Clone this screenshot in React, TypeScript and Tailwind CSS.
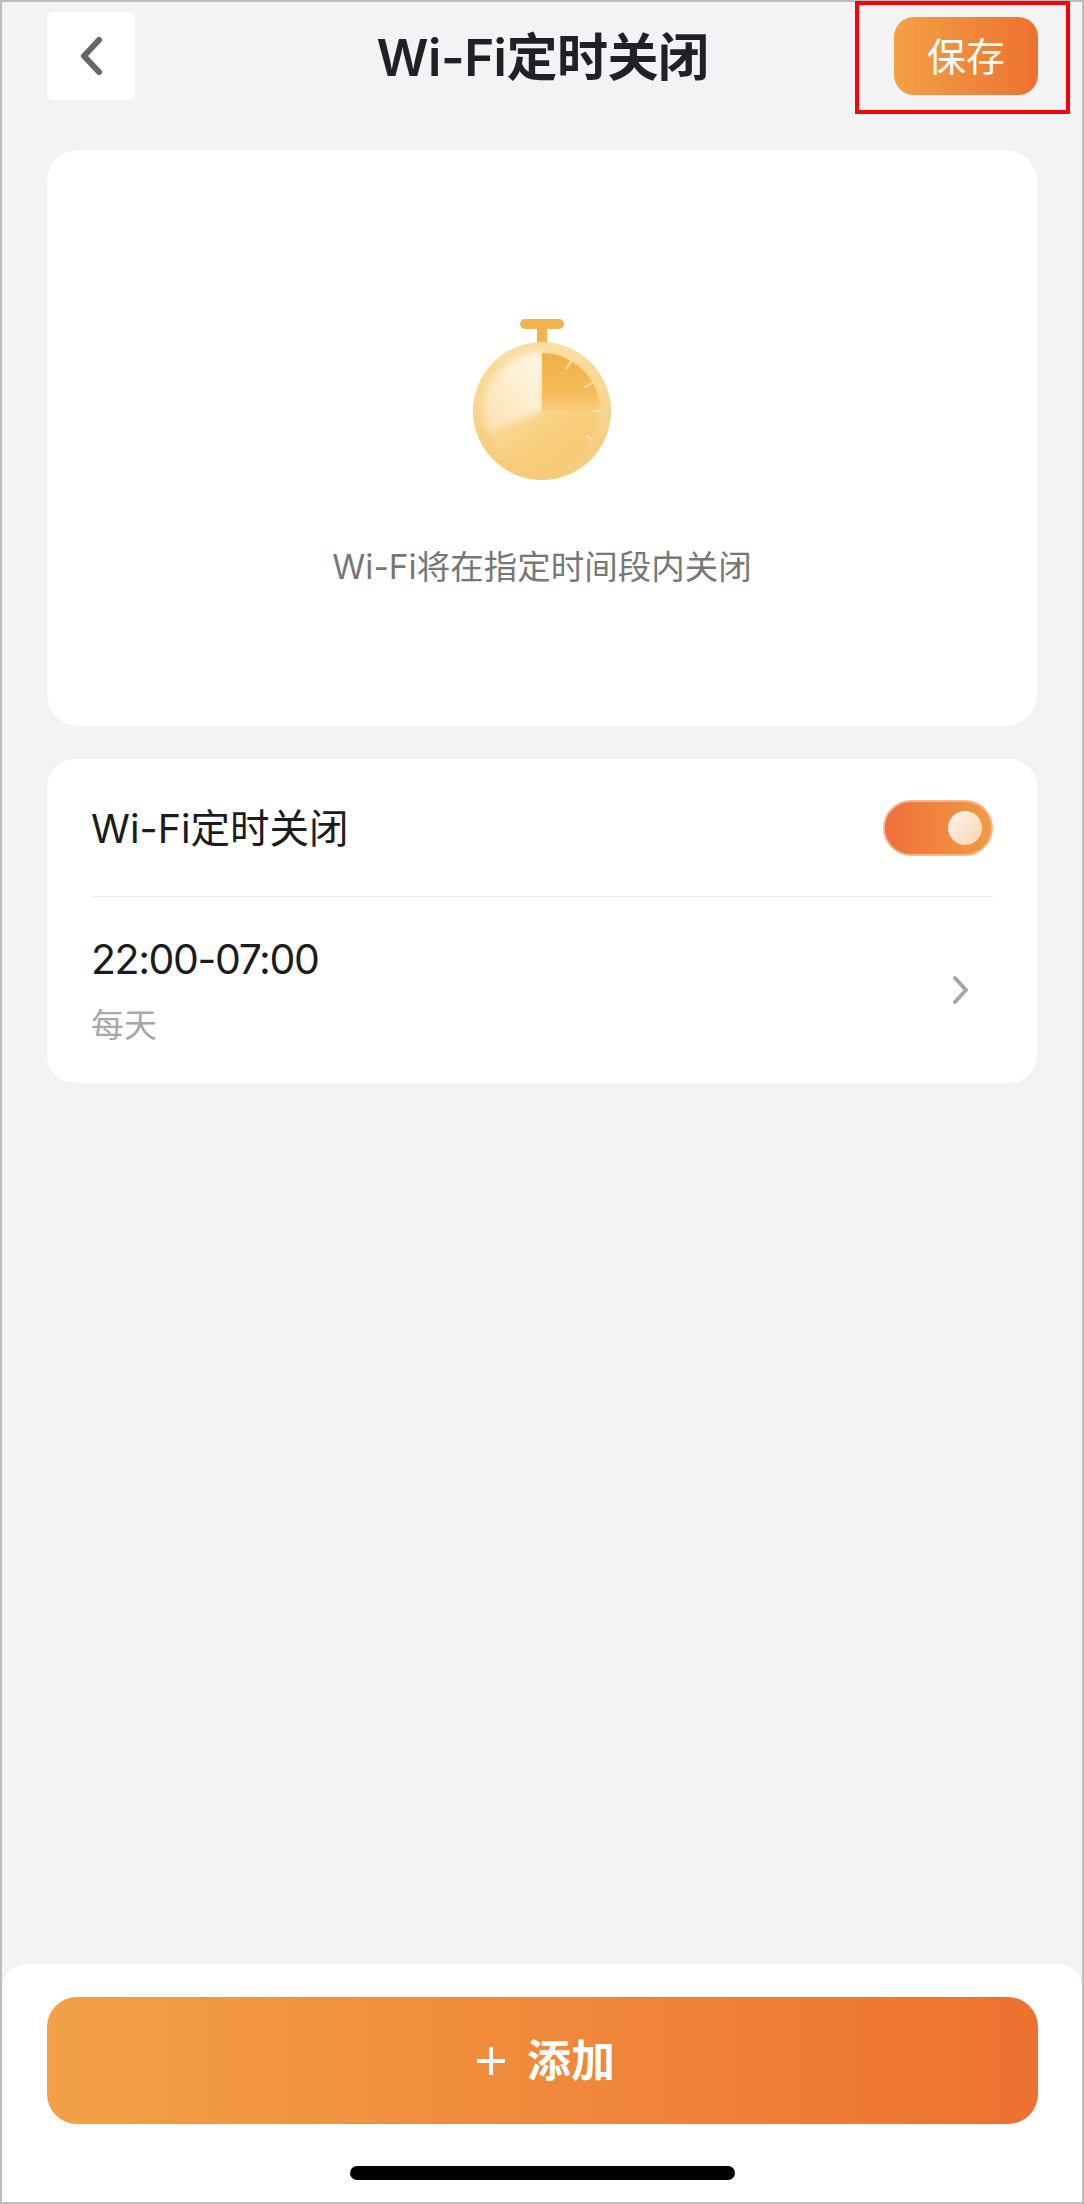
const cjk = "font-['Inter','Noto_Sans_CJK_SC',sans-serif]";

function Stopwatch() {
  return (
    <svg className="block" width="140" height="162" viewBox="0 0 140 162" fill="none">
      <defs>
        <linearGradient id="ring" x1="0" y1="0" x2="0" y2="1">
          <stop offset="0" stopColor="#fadfa6" />
          <stop offset="1" stopColor="#f6ca76" />
        </linearGradient>
        <linearGradient id="quarter" x1="0" y1="0" x2="0" y2="1">
          <stop offset="0" stopColor="#f2b044" />
          <stop offset="0.7" stopColor="#f5bd5c" />
          <stop offset="1" stopColor="#f8cd7c" />
        </linearGradient>
        <linearGradient id="rest" x1="0.2" y1="0.3" x2="0.7" y2="1">
          <stop offset="0" stopColor="#fae0aa" />
          <stop offset="0.6" stopColor="#f8cf7e" />
          <stop offset="1" stopColor="#f7ca72" />
        </linearGradient>
        <linearGradient id="pale" x1="1" y1="0" x2="0" y2="1">
          <stop offset="0" stopColor="#fff8ec" />
          <stop offset="0.55" stopColor="#fdebc8" />
          <stop offset="1" stopColor="#fbe0ab" />
        </linearGradient>
        <filter id="soft" x="-20%" y="-20%" width="140%" height="140%">
          <feGaussianBlur stdDeviation="3" />
        </filter>
      </defs>
      <rect x="48" y="0" width="44" height="10" rx="5" fill="#f3b44f" />
      <rect x="65" y="8" width="10" height="18" fill="#f3b44f" />
      <circle cx="70" cy="92" r="69" fill="url(#ring)" />
      <circle cx="70" cy="92" r="58" fill="url(#rest)" filter="url(#soft)" />
      <path d="M70 92 V34 A58 58 0 0 0 12 92 Q13 103 17 113 Z" fill="url(#pale)" filter="url(#soft)" />
      <path d="M70 92 V34 A58 58 0 0 1 128 92 Z" fill="url(#quarter)" />
      <g stroke="#fbe3b3" strokeWidth="2" strokeLinecap="round">
        <path d="M99 42 L95 49" />
        <path d="M120 64 L113 68" />
        <path d="M128 92 L122 92" />
        <path d="M120 120 L114 117" />
      </g>
    </svg>
  );
}

export default function App() {
  return (
    <div className={`relative w-[1084px] h-[2204px] border-2 border-[#bdbdbd] bg-[#f2f3f5] flex flex-col ${cjk}`}>
      <header className="grid grid-cols-[1fr_auto_1fr] items-start pl-[45px] pr-[44px] pt-[10px]">
        <div className="w-[88px] h-[88px] bg-white rounded-[6px] flex items-center justify-center">
          <svg width="24" height="38" viewBox="0 0 24 38" fill="none">
            <path d="M20 3 L5 19 L20 35" stroke="#666666" strokeWidth="6" strokeLinecap="round" strokeLinejoin="round" />
          </svg>
        </div>
        <h1 className="text-[51px] leading-[68px] tracking-[-0.5px] mt-[12px] font-semibold text-[#1f2126]">Wi-Fi定时关闭</h1>
        <button className="justify-self-end w-[144px] h-[78px] mt-[5px] rounded-[20px] bg-gradient-to-r from-[#f2a146] to-[#ed7030] text-white text-[39px] leading-none">
          保存
        </button>
      </header>

      <section className="mx-[45px] mt-[50px] h-[576px] bg-white rounded-[32px] flex flex-col items-center pt-[169px]">
        <Stopwatch />
        <p className="mt-[62px] text-[33.5px] leading-[48px] text-[#777777]">Wi-Fi将在指定时间段内关闭</p>
      </section>

      <section className="mx-[45px] mt-[33px] h-[324px] bg-white rounded-[28px] px-[44px]">
        <div className="h-[138px] flex items-center justify-between border-b border-[#ebebee]">
          <span className="text-[39.5px] mt-[4px] text-[#1c1c1e]">Wi-Fi定时关闭</span>
          <div className="w-[110px] h-[56px] rounded-full bg-gradient-to-r from-[#ee6f3a] to-[#f39a42] border-2 border-[#f6b78c] flex items-center justify-end pr-[9px]">
            <div className="w-[34px] h-[34px] rounded-full bg-gradient-to-br from-[#fdf5ec] to-[#f6d3b0]" />
          </div>
        </div>
        <div className="flex items-center justify-between h-[185px]">
          <div className="flex flex-col">
            <span className="text-[41px] leading-[60px] tracking-[-1.4px] text-[#1c1c1e] -mt-[2px]">22:00-07:00</span>
            <span className="text-[33px] leading-[48px] mt-[12px] text-[#a8a8aa]">每天</span>
          </div>
          <svg className="mr-[22px]" width="20" height="30" viewBox="0 0 20 30" fill="none">
            <path d="M4 3 L15 15 L4 27" stroke="#a5a6a9" strokeWidth="4" strokeLinecap="round" strokeLinejoin="round" />
          </svg>
        </div>
      </section>

      <footer className="mt-auto h-[238px] bg-white rounded-t-[24px] flex flex-col items-center">
        <button className="mt-[33px] w-[991px] h-[127px] rounded-[30px] bg-gradient-to-r from-[#f2a146] to-[#ed7030] text-white text-[44px] font-bold flex items-center justify-center gap-[22px] pl-[8px]">
          <svg width="28" height="28" viewBox="0 0 28 28" fill="none">
            <path d="M14 0 V28 M0 14 H28" stroke="#ffffff" strokeWidth="4" />
          </svg>
          添加
        </button>
        <div className="mt-[42px] w-[385px] h-[14px] rounded-full bg-black" />
      </footer>

      <div className="absolute left-[853px] -top-[1px] w-[215px] h-[113px] border-[4px] border-[#fb0007]" />
    </div>
  );
}
